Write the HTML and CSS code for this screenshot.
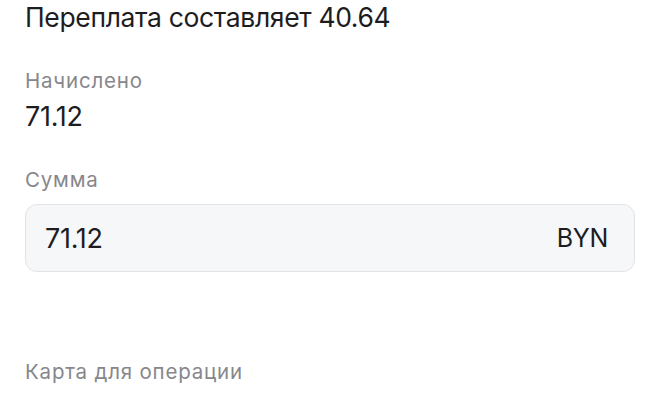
FILE: index.html
```html
<!DOCTYPE html>
<html lang="ru">
<head>
<meta charset="utf-8">
<title>Переплата</title>
<link rel="stylesheet" href="styles.css">
</head>
<body>
<main class="page">
  <h1 class="title">Переплата составляет 40.64</h1>
  <div class="label label-accrued">Начислено</div>
  <div class="value">71.12</div>
  <div class="label label-sum">Сумма</div>
  <div class="amount-field">
    <span class="amount-value">71.12</span>
    <span class="amount-currency">BYN</span>
  </div>
  <div class="label label-card">Карта для операции</div>
</main>
</body>
</html>
```

FILE: styles.css
```css
* { box-sizing: border-box; }
html, body {
  margin: 0;
  padding: 0;
  background: #ffffff;
}
body {
  font-family: Inter, "Noto Sans", "Liberation Sans", sans-serif;
  color: #1d1d1f;
}
.page {
  padding: 0 25px;
  display: flex;
  flex-direction: column;
}
.title {
  margin: 0;
  font-size: 26.5px;
  line-height: 34px;
  font-weight: 400;
  letter-spacing: -0.35px;
}
.label {
  font-size: 20.5px;
  line-height: 24px;
  letter-spacing: 0.8px;
  color: #87878b;
}
.label-accrued { margin-top: 35px; }
.value {
  margin-top: 7px;
  font-size: 27px;
  line-height: 34px;
  letter-spacing: -0.3px;
}
.label-sum { margin-top: 34px; }
.amount-field {
  margin-top: 12px;
  height: 68px;
  border: 1px solid #e2e3e7;
  border-radius: 12px;
  background: #f6f7f9;
  display: flex;
  align-items: center;
  justify-content: space-between;
  padding: 0 26px 0 19px;
}
.amount-value {
  font-size: 27px;
  letter-spacing: -0.3px;
}
.amount-currency {
  font-size: 25px;
  letter-spacing: -0.3px;
}
.label-card { margin-top: 88px; }
```
